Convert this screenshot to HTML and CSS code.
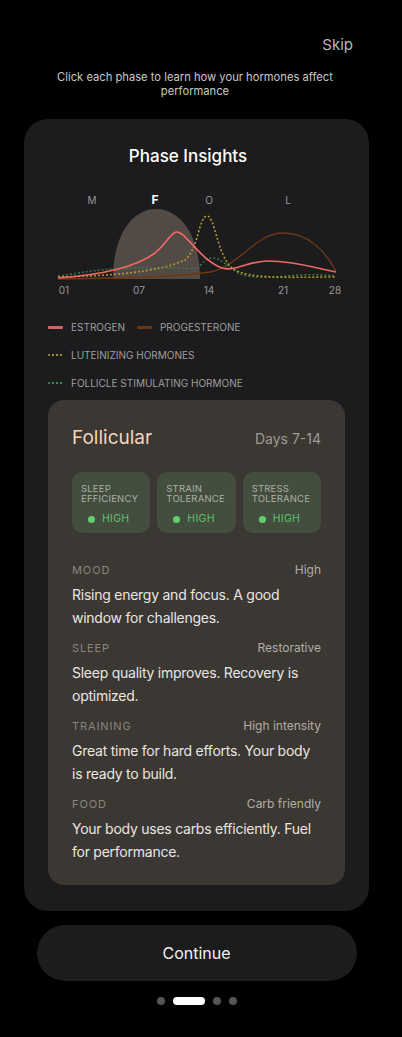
FILE: index.html
```html
<!DOCTYPE html>
<html lang="en">
<head>
<meta charset="utf-8">
<title>Phase Insights</title>
<link rel="stylesheet" href="styles.css">
</head>
<body>
<div class="screen">
  <div class="top-bar"><span class="skip">Skip</span></div>
  <p class="subtitle">Click each phase to learn how your hormones affect<br>performance</p>

  <section class="card">
    <h1 class="card-title">Phase Insights</h1>

    <svg class="chart" width="297" height="112" viewBox="48 186 297 112" xmlns="http://www.w3.org/2000/svg">
      <g class="phase-labels" font-family="Inter, 'Noto Sans', sans-serif" font-size="10" text-anchor="middle">
        <text x="92" y="204" fill="#9a9794">M</text>
        <text x="155" y="204" fill="#ffffff" font-weight="700" font-size="12">F</text>
        <text x="209" y="204" fill="#9a9794">O</text>
        <text x="288" y="204" fill="#9a9794">L</text>
      </g>
      <path d="M113 279 C113 235 132 209 156 209 C180 209 200 235 200 279 Z" fill="#524a44"/>
      <path d="M58 279 C120 278 180 277 210 272 C240 266 255 233 283 233 C310 233 325 252 336 271" fill="none" stroke="#6e3a16" stroke-width="1.3"/>
      <path d="M58 276 C80 273 95 270 113 269 C140 267 180 268 197 269 C203 262 206 258 212 258 C222 258 228 268 240 274 C255 279 275 277 300 275 C315 274 325 275 336 276" fill="none" stroke="#3f7c46" stroke-width="1.4" stroke-dasharray="2 2"/>
      <path d="M58 277 C110 276 160 272 185 260 C198 250 199 216 207 216 C215 216 217 255 232 268 C248 280 290 277 336 277" fill="none" stroke="#b39a2e" stroke-width="1.6" stroke-dasharray="2 2"/>
      <path d="M58 278 C100 275 135 268 155 253 C167 243 171 232 177 232 C186 232 200 260 222 268 C235 272 248 261 268 261 C295 261 315 268 336 272" fill="none" stroke="#f06868" stroke-width="1.6"/>
      <g class="axis-labels" font-family="Inter, 'Noto Sans', sans-serif" font-size="10" fill="#9a9794" text-anchor="middle">
        <text x="64" y="294">01</text>
        <text x="139" y="294">07</text>
        <text x="209" y="294">14</text>
        <text x="283" y="294">21</text>
        <text x="335" y="294">28</text>
      </g>
    </svg>

    <div class="legend">
      <div class="legend-row">
        <span class="legend-item"><span class="swatch swatch-estrogen"></span>ESTROGEN</span>
        <span class="legend-item"><span class="swatch swatch-progesterone"></span>PROGESTERONE</span>
      </div>
      <div class="legend-row">
        <span class="legend-item"><span class="swatch swatch-lh"></span>LUTEINIZING HORMONES</span>
      </div>
      <div class="legend-row">
        <span class="legend-item"><span class="swatch swatch-fsh"></span>FOLLICLE STIMULATING HORMONE</span>
      </div>
    </div>

    <div class="phase-card">
      <div class="phase-header">
        <h2 class="phase-name">Follicular</h2>
        <span class="phase-days">Days 7-14</span>
      </div>

      <div class="metrics">
        <div class="metric">
          <div class="metric-label">SLEEP<br>EFFICIENCY</div>
          <div class="metric-status"><span class="dot"></span>HIGH</div>
        </div>
        <div class="metric">
          <div class="metric-label">STRAIN<br>TOLERANCE</div>
          <div class="metric-status"><span class="dot"></span>HIGH</div>
        </div>
        <div class="metric">
          <div class="metric-label">STRESS<br>TOLERANCE</div>
          <div class="metric-status"><span class="dot"></span>HIGH</div>
        </div>
      </div>

      <div class="insights">
        <div class="insight">
          <div class="insight-head"><span class="insight-label">MOOD</span><span class="insight-value">High</span></div>
          <p class="insight-text">Rising energy and focus. A good window for challenges.</p>
        </div>
        <div class="insight">
          <div class="insight-head"><span class="insight-label">SLEEP</span><span class="insight-value">Restorative</span></div>
          <p class="insight-text">Sleep quality improves. Recovery is optimized.</p>
        </div>
        <div class="insight">
          <div class="insight-head"><span class="insight-label">TRAINING</span><span class="insight-value">High intensity</span></div>
          <p class="insight-text">Great time for hard efforts. Your body is ready to build.</p>
        </div>
        <div class="insight">
          <div class="insight-head"><span class="insight-label">FOOD</span><span class="insight-value">Carb friendly</span></div>
          <p class="insight-text">Your body uses carbs efficiently. Fuel for performance.</p>
        </div>
      </div>
    </div>
  </section>

  <button class="continue" type="button">Continue</button>

  <div class="pager">
    <span class="pager-dot"></span>
    <span class="pager-dot active"></span>
    <span class="pager-dot"></span>
    <span class="pager-dot"></span>
  </div>
</div>
</body>
</html>
```

FILE: styles.css
```css
* { box-sizing: border-box; }

html, body {
  margin: 0;
  padding: 0;
  background: #000;
}

body {
  font-family: Inter, "Noto Sans", "Liberation Sans", sans-serif;
  color: #fff;
  -webkit-font-smoothing: antialiased;
}

.screen {
  width: 345px;
  margin-left: 24px;
  padding-top: 35px;
  padding-bottom: 20px;
}

.top-bar {
  display: flex;
  justify-content: flex-end;
  padding-right: 16px;
  height: 20px;
}

.skip {
  font-size: 15px;
  line-height: 20px;
  color: #b8b8b8;
}

.subtitle {
  margin: 15px 0 0;
  text-align: center;
  font-size: 11.2px;
  line-height: 14px;
  color: #c9c9c9;
  padding-right: 3px;
}

.card {
  margin-top: 21px;
  background: #1c1c1e;
  border-radius: 24px;
  padding: 27px 24px 26px;
}

.card-title {
  margin: 0;
  padding-right: 17px;
  text-align: center;
  font-size: 17px;
  line-height: 20px;
  font-weight: 500;
  color: #ffffff;
}

.chart {
  display: block;
  margin-top: 20px;
}

.legend {
  margin-top: 22px;
  display: flex;
  flex-direction: column;
  gap: 14px;
}

.legend-row {
  display: flex;
  gap: 12px;
  height: 14px;
}

.legend-item {
  display: flex;
  align-items: center;
  gap: 8px;
  font-size: 10px;
  line-height: 14px;
  color: #a19e9b;
}

.swatch {
  display: inline-block;
  width: 15px;
  height: 3px;
  border-radius: 1px;
}

.swatch-estrogen { background: #d66363; }
.swatch-progesterone { background: #6a3715; }
.swatch-lh {
  height: 1.5px;
  background: repeating-linear-gradient(90deg, #a48d33 0 2px, transparent 2px 4px);
}
.swatch-fsh {
  height: 1.5px;
  background: repeating-linear-gradient(90deg, #3f8a4a 0 2px, transparent 2px 4px);
}

.phase-card {
  margin-top: 10px;
  background: #3b3733;
  border-radius: 16px;
  padding: 26px 24px 22px;
}

.phase-header {
  display: flex;
  justify-content: space-between;
  align-items: center;
  height: 24px;
}

.phase-name {
  margin: 0;
  font-size: 19px;
  line-height: 24px;
  font-weight: 400;
  color: #f5d5bc;
}

.phase-days {
  font-size: 14px;
  color: #a09a95;
}

.metrics {
  margin-top: 22px;
  display: grid;
  grid-template-columns: repeat(3, 1fr);
  gap: 7px;
}

.metric {
  background: #434e3f;
  border-radius: 10px;
  padding: 12px 6px 8px 9px;
  height: 61px;
}

.metric-label {
  font-size: 9.5px;
  line-height: 10px;
  color: #acb0a3;
  letter-spacing: 0.2px;
}

.metric-status {
  margin-top: 9px;
  padding-left: 7px;
  display: flex;
  align-items: center;
  gap: 7px;
  font-size: 10.5px;
  line-height: 12px;
  color: #5cc36a;
  letter-spacing: 0.3px;
}

.dot {
  width: 7px;
  height: 7px;
  border-radius: 50%;
  background: #5fd06c;
}

.insights {
  margin-top: 30px;
  display: flex;
  flex-direction: column;
  gap: 12.5px;
}

.insight-head {
  display: flex;
  justify-content: space-between;
  align-items: center;
  height: 14px;
}

.insight-label {
  font-size: 11px;
  line-height: 14px;
  letter-spacing: 0.9px;
  color: #8a847e;
}

.insight-value {
  font-size: 12px;
  line-height: 14px;
  color: #b2ada7;
}

.insight-text {
  margin: 5.5px 0 0;
  font-size: 14px;
  line-height: 23px;
  letter-spacing: -0.25px;
  color: #e9e6e1;
}

.continue {
  display: block;
  width: 320px;
  height: 56px;
  margin: 14px auto 0;
  border: none;
  border-radius: 28px;
  background: #1c1c1c;
  color: #f2f2f2;
  font-family: inherit;
  font-size: 16px;
}

.pager {
  margin-top: 16px;
  display: flex;
  justify-content: center;
  gap: 8px;
}

.pager-dot {
  width: 8px;
  height: 8px;
  border-radius: 4px;
  background: #555555;
}

.pager-dot.active {
  width: 32px;
  background: #ffffff;
}
```
